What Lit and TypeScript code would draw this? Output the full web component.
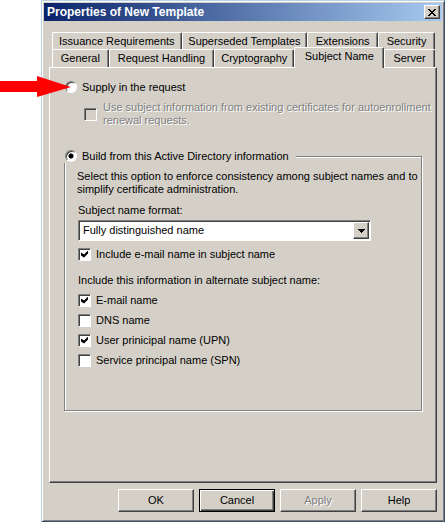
import { LitElement, html, css } from "lit";
import { customElement, state } from "lit/decorators.js";

@customElement("app-root")
export class AppRoot extends LitElement {
  static styles = css`
    :host {
      --face: #d4d0c8;
      --shade: #808080;
      --dark: #404040;
      display: block;
      position: relative;
      box-sizing: border-box;
      min-height: 100vh;
      padding-left: 41px;
      background: #fff;
      color: #000;
      font: 11px/13px "Liberation Sans", Arial, sans-serif;
    }
    * {
      box-sizing: border-box;
    }
    button,
    select,
    input {
      font: inherit;
      color: inherit;
      margin: 0;
      padding: 0;
      border-radius: 0;
      appearance: none;
    }
    .dialog {
      display: flex;
      flex-direction: column;
      min-height: 100vh;
      padding: 1px;
      background: var(--face);
      border: 1px solid #3c5070;
      border-left-color: #b8d4e4;
      border-top-color: #b8d4e4;
      box-shadow: inset 1px 1px #fff, inset -1px -1px var(--shade);
    }
    .title {
      display: flex;
      align-items: center;
      justify-content: space-between;
      height: 18px;
      margin: 1px 1px 0;
      padding: 0 2px 0 3px;
      background: linear-gradient(to right, #0a246a, #a6caf0);
      color: #fff;
    }
    h1 {
      margin: 0;
      font-size: 12px;
      line-height: 16px;
    }
    .raised {
      background: var(--face);
      border: 1px solid var(--dark);
      border-top-color: #fff;
      border-left-color: #fff;
      box-shadow: inset -1px -1px var(--shade);
    }
    .close {
      display: grid;
      place-items: center;
      width: 16px;
      height: 14px;
      color: #000;
    }
    .body {
      flex: 1;
      display: flex;
      flex-direction: column;
      padding: 11px 6px 8px;
    }
    .tabs {
      display: flex;
      padding: 0 2px 0 3px;
    }
    .tab {
      height: 17px;
      padding: 0;
      background: var(--face);
      border: 1px solid #fff;
      border-right-color: var(--dark);
      border-bottom: 0;
      border-radius: 2px 2px 0 0;
      box-shadow: inset -1px 0 var(--shade);
      white-space: nowrap;
      flex: 1 1 0;
    }
    .front .tab {
      height: 18px;
    }
    .front .tab.active {
      position: relative;
      height: 21px;
      margin: -2px 0 -1px;
      padding-bottom: 3px;
    }
    .w1 { flex-grow: 130; }
    .w2 { flex-grow: 126; }
    .w3 { flex-grow: 70; }
    .w4 { flex-grow: 56; }
    .w5 { flex-grow: 56; }
    .w6 { flex-grow: 106; }
    .w7 { flex-grow: 80; }
    .w8 { flex-grow: 90; }
    .w9 { flex-grow: 50; }
    .panel {
      flex: 1;
      padding: 12px 14px;
      border: 1px solid var(--dark);
      border-top-color: #fff;
      border-left-color: #fff;
      box-shadow: inset -1px -1px var(--shade);
    }
    .choice {
      display: flex;
      align-items: center;
      gap: 5px;
      min-height: 14px;
    }
    .supply {
      margin-left: 1px;
    }
    .radio {
      flex: none;
      width: 12px;
      height: 12px;
      border: 1px solid var(--shade);
      border-right-color: #fff;
      border-bottom-color: #fff;
      border-radius: 50%;
      background: #fff;
      box-shadow: inset 1px 1px var(--dark);
    }
    .radio:checked {
      background: radial-gradient(circle, #000 2px, #fff 3px);
    }
    .check {
      flex: none;
      display: grid;
      place-items: center;
      width: 13px;
      height: 13px;
      border: 1px solid var(--shade);
      border-right-color: #fff;
      border-bottom-color: #fff;
      background: #fff;
      box-shadow: inset 1px 1px var(--dark);
    }
    .check:checked::after {
      content: "";
      width: 7px;
      height: 7px;
      background: #000;
      clip-path: polygon(0 2px, 3px 4px, 7px 0, 7px 3px, 3px 7px, 0 5px);
    }
    .check:disabled {
      background: var(--face);
    }
    .disabled {
      color: var(--shade);
      text-shadow: 1px 1px #fff;
    }
    .renewal {
      gap: 6px;
      margin: 7px -12px 0 20px;
    }
    fieldset {
      min-width: 0;
      margin: 22px 0 0;
      padding: 7px 2px 40px 12px;
      border: 1px solid var(--shade);
      box-shadow: 1px 1px #fff, inset 1px 1px #fff;
    }
    legend {
      margin-left: -13px;
      padding: 0 7px 0 1px;
      background: var(--face);
    }
    p {
      margin: 0;
    }
    .field {
      display: block;
      margin: 8px 0 3px 1px;
    }
    .combo {
      display: grid;
      width: 293px;
      max-width: 100%;
      height: 21px;
      margin-left: 1px;
    }
    .combo > * {
      grid-area: 1 / 1;
    }
    select {
      padding: 0 20px 0 4px;
      border: 1px solid var(--shade);
      border-right-color: #fff;
      border-bottom-color: #fff;
      background: #fff;
      box-shadow: inset 1px 1px var(--dark);
    }
    .arrow {
      display: grid;
      place-items: center;
      justify-self: end;
      width: 16px;
      margin: 2px;
      pointer-events: none;
    }
    .option {
      height: 20px;
    }
    .include {
      margin: 10px 0 3px 1px;
    }
    .list {
      margin: 3px 0 0 1px;
    }
    .actions {
      display: flex;
      justify-content: flex-end;
      gap: 5px;
      margin-top: 6px;
    }
    .action {
      width: 76px;
      height: 23px;
    }
    .default {
      border: 1px solid #000;
      box-shadow: inset 1px 1px #fff, inset -1px -1px var(--dark), inset -2px -2px var(--shade);
    }
    .pointer {
      position: absolute;
      left: 0;
      top: 76px;
    }
  `;

  @state() private active = "Subject Name";

  private back: [string, string][] = [
    ["Issuance Requirements", "w1"],
    ["Superseded Templates", "w2"],
    ["Extensions", "w3"],
    ["Security", "w4"],
  ];
  private front: [string, string][] = [
    ["General", "w5"],
    ["Request Handling", "w6"],
    ["Cryptography", "w7"],
    ["Subject Name", "w8"],
    ["Server", "w9"],
  ];
  private names: [string, boolean][] = [
    ["E-mail name", true],
    ["DNS name", false],
    ["User prinicipal name (UPN)", true],
    ["Service principal name (SPN)", false],
  ];

  private tab([name, width]: [string, string]) {
    const on = name === this.active;
    return html`<button role="tab" aria-selected=${on} class="tab ${width} ${on ? "active" : ""}"
      @click=${() => (this.active = name)}>${name}</button>`;
  }

  private option(name: string, checked: boolean) {
    return html`<label class="choice option"><input class="check" type="checkbox" .checked=${checked} />${name}</label>`;
  }

  render() {
    return html`
      <main class="dialog">
        <header class="title">
          <h1>Properties of New Template</h1>
          <button class="close raised" aria-label="Close">
            <svg width="8" height="7" viewBox="0 0 8 7" shape-rendering="crispEdges">
              <path d="M0 0h2v1h1v1h2v-1h1v-1h2v1h-1v1h-1v1h-1v1h1v1h1v1h1v1h-2v-1h-1v-1h-2v1h-1v1h-2v-1h1v-1h1v-1h1v-1h-1v-1h-1v-1h-1z" />
            </svg>
          </button>
        </header>
        <div class="body">
          <div role="tablist">
            <div class="tabs" role="presentation">${this.back.map((t) => this.tab(t))}</div>
            <div class="tabs front" role="presentation">${this.front.map((t) => this.tab(t))}</div>
          </div>
          <section class="panel" role="tabpanel">
            <label class="choice supply"><input class="radio" type="radio" name="source" />Supply in the request</label>
            <label class="choice renewal disabled">
              <input class="check" type="checkbox" disabled />
              <span>Use subject information from existing certificates for autoenrollment renewal requests.</span>
            </label>
            <fieldset>
              <legend>
                <label class="choice"><input class="radio" type="radio" name="source" checked />Build from this Active Directory information</label>
              </legend>
              <p>Select this option to enforce consistency among subject names and to simplify certificate administration.</p>
              <label class="field" for="format">Subject name format:</label>
              <div class="combo">
                <select id="format"><option>Fully distinguished name</option></select>
                <span class="arrow raised">
                  <svg width="7" height="4" viewBox="0 0 7 4" shape-rendering="crispEdges"><path d="M0 0h7v1h-1v1h-1v1h-1v1h-1v-1h-1v-1h-1v-1h-1z" /></svg>
                </span>
              </div>
              <div class="list">${this.option("Include e-mail name in subject name", true)}</div>
              <p class="include">Include this information in alternate subject name:</p>
              <div class="list">${this.names.map(([n, c]) => this.option(n, c))}</div>
            </fieldset>
          </section>
          <footer class="actions">
            <button class="action raised">OK</button>
            <button class="action raised default">Cancel</button>
            <button class="action raised disabled" disabled>Apply</button>
            <button class="action raised">Help</button>
          </footer>
        </div>
      </main>
      <svg class="pointer" width="72" height="22" viewBox="0 0 72 22" aria-hidden="true">
        <path fill="#f00" d="M0 5h37V0l34 11-34 10v-5H0z" />
      </svg>
    `;
  }
}
